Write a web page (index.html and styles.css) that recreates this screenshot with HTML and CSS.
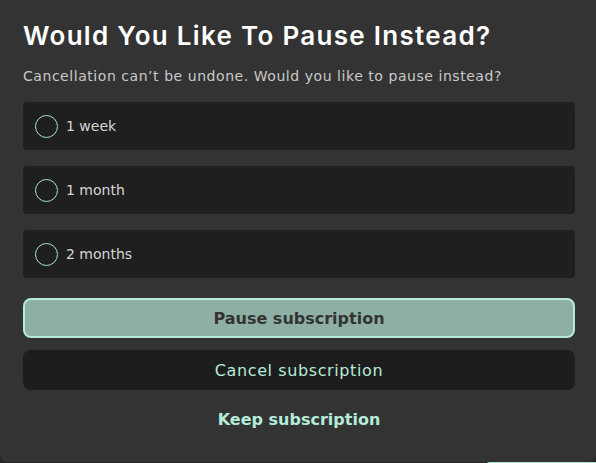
FILE: index.html
```html
<!DOCTYPE html>
<html>
<head>
    <link rel="stylesheet" href="styles.css">
</head>
<body>
    <div class="dialog">
        <h2 class="title">Would You Like To Pause Instead?</h2>
        <p class="subtitle">Cancellation can’t be undone. Would you like to pause instead?</p>

        <!-- Pause length options -->
        <div class="options">
            <label class="option"><span class="radio"></span>1 week</label>
            <label class="option"><span class="radio"></span>1 month</label>
            <label class="option"><span class="radio"></span>2 months</label>
        </div>

        <div class="actions">
            <button class="button primary">Pause subscription</button>
            <button class="button dark">Cancel subscription</button>
            <button class="button link">Keep subscription</button>
        </div>
    </div>
    <div class="underlay">
        <div class="underlay-tab"></div>
    </div>
</body>
</html>
```

FILE: styles.css
```css
body {
    margin: 0;
    background-color: #262626;
    font-family: "DejaVu Sans", sans-serif;
    overflow: hidden;
}
.dialog {
    height: 462px;
    box-sizing: border-box;
    background-color: #333333;
    border-radius: 0 0 8px 8px;
    padding: 18px 21px 0 23px;
}
.title {
    margin: 0;
    color: #ffffff;
    font-family: Inter, "DejaVu Sans", sans-serif;
    font-size: 26px;
    line-height: 36px;
    font-weight: 600;
    letter-spacing: 1.3px;
}
.subtitle {
    margin: 13px 0 0 0;
    color: #c9c9c9;
    font-size: 14px;
    line-height: 18px;
    letter-spacing: 0.55px;
}
.options {
    display: flex;
    flex-direction: column;
    gap: 16px;
    margin-top: 17px;
}
.option {
    display: flex;
    align-items: center;
    gap: 8px;
    height: 48px;
    padding-left: 12px;
    background-color: #1f1f1f;
    border-radius: 4px;
    color: #d6d6d6;
    font-size: 14px;
}
.radio {
    width: 21px;
    height: 21px;
    border: 1.5px solid #a9e4d0;
    border-radius: 50%;
}
.actions {
    display: flex;
    flex-direction: column;
    gap: 12px;
    margin-top: 20px;
}
.button {
    height: 40px;
    border: none;
    border-radius: 8px;
    font-family: inherit;
    font-size: 16px;
    cursor: pointer;
}
.button.primary {
    background-color: #8eb0a4;
    border: 2px solid #b5ebd9;
    color: #333333;
    font-weight: bold;
}
.button.dark {
    background-color: #1d1d1d;
    color: #b5ebd9;
    letter-spacing: 0.6px;
}
.button.link {
    height: 34px;
    background-color: transparent;
    color: #b5ebd9;
    font-weight: bold;
}
.underlay {
    display: flex;
    justify-content: flex-end;
}
.underlay-tab {
    width: 110px;
    height: 20px;
    background-color: #a9e4d0;
    border-radius: 4px 0 0 0;
}
```
